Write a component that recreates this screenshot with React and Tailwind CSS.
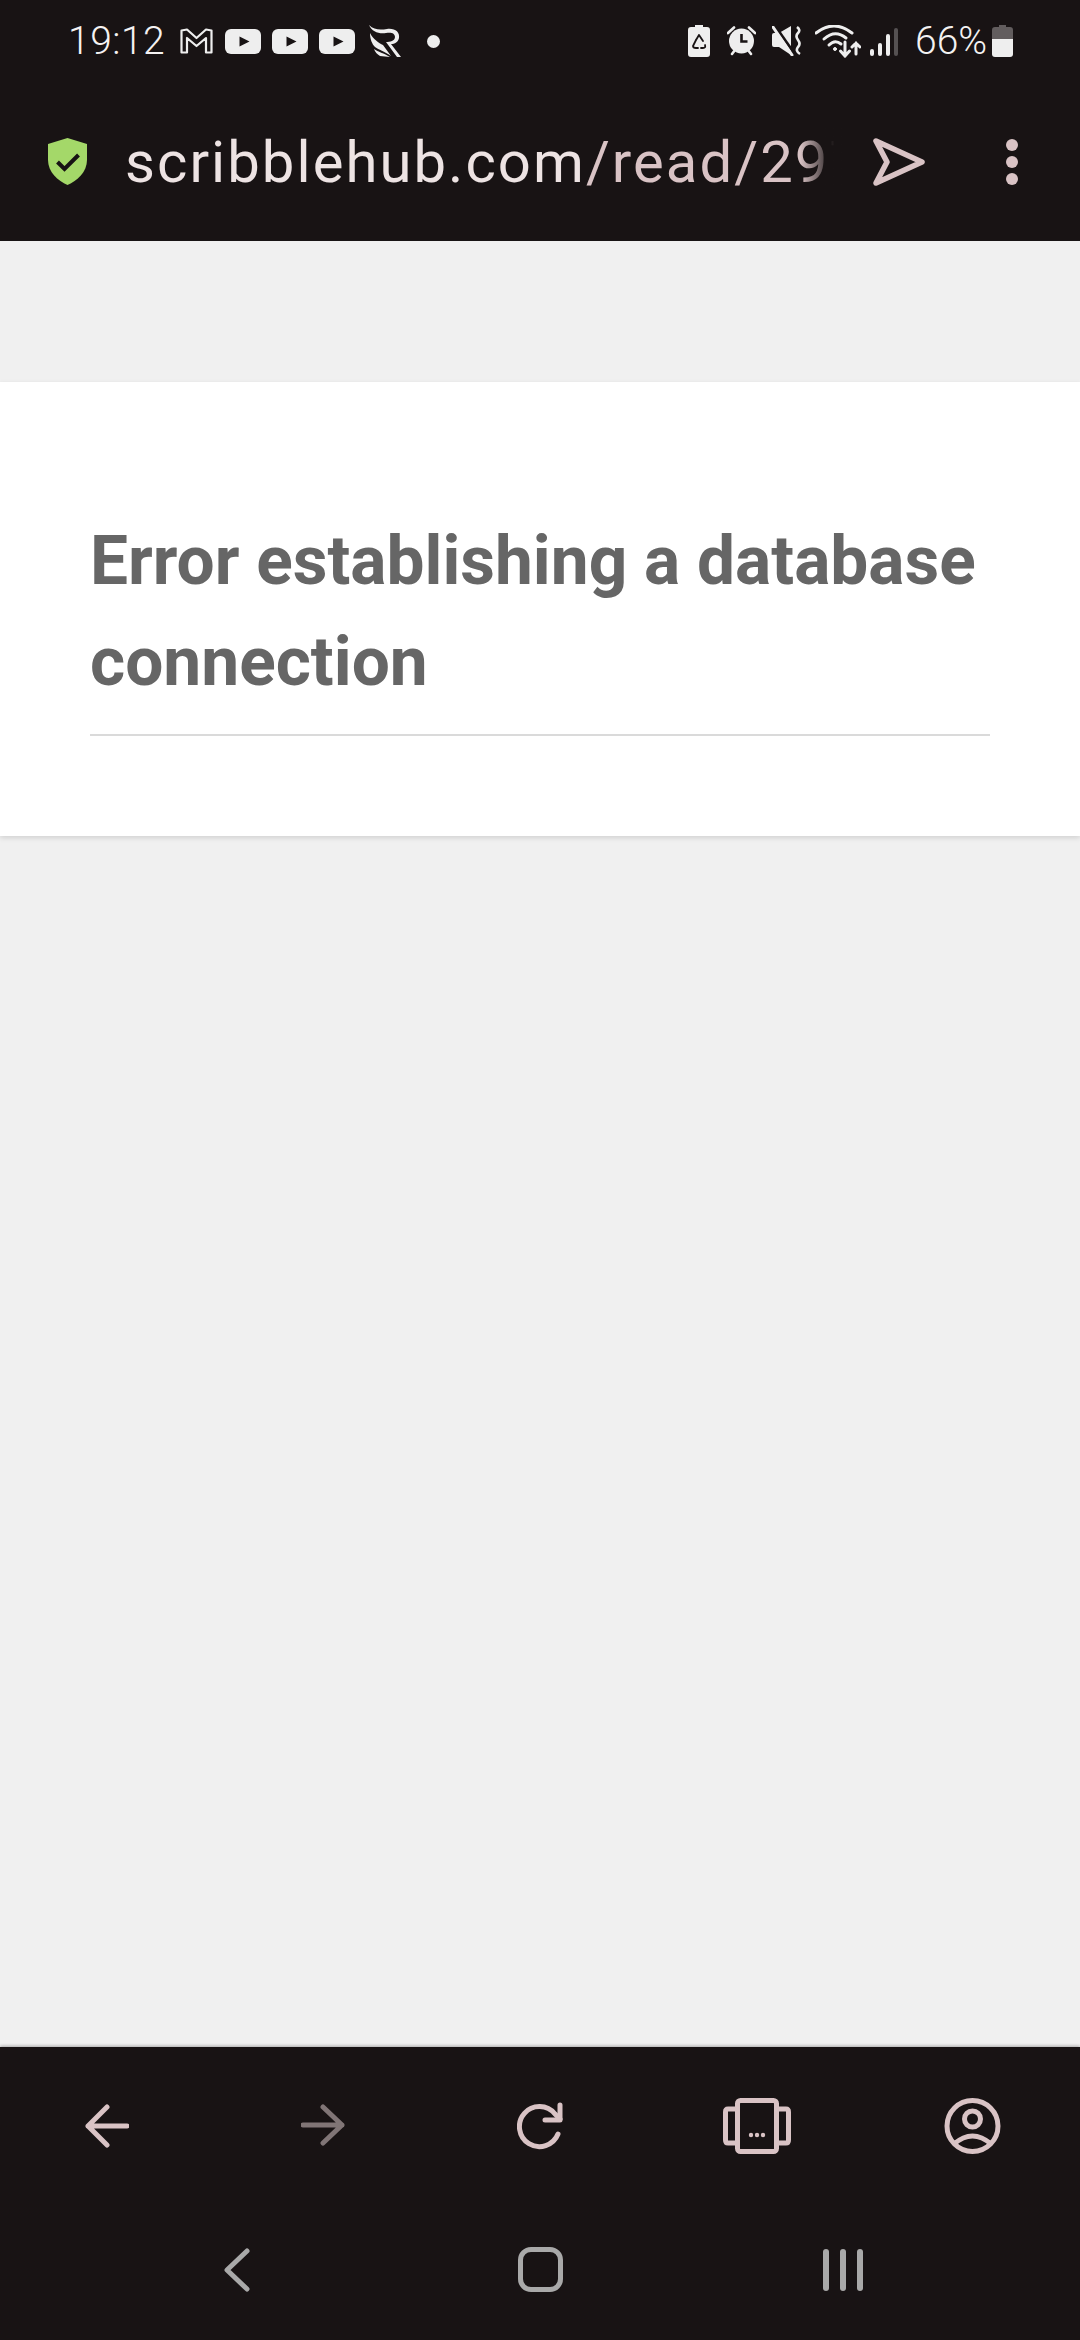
import React from 'react';

const Youtube = () => (
    <svg width="36" height="25" viewBox="0 0 36 25" className="shrink-0">
        <rect width="36" height="25" rx="6" fill="#eeeeee" />
        <path d="M14.5 7.5 L24.5 12.5 L14.5 17.5 Z" fill="#181314" />
    </svg>
);

const StatusLeft = () => (
    <div className="flex items-center">
        <span className="text-[39px] font-light text-[#f4f2f2] leading-none tracking-[0.5px] w-[112px]">19:12</span>
        <svg width="33" height="26" viewBox="0 0 33 26" className="shrink-0" fill="none" stroke="#eeeeee" strokeWidth="2.2" strokeLinejoin="round">
            <path d="M1.5 2.5 L7 1.5 L16.5 10 L26 1.5 L31.5 2.5 L31.5 24.5 L26 24.5 L26 10 L16.5 18 L7 10 L7 24.5 L1.5 24.5 Z" />
        </svg>
        <div className="flex items-center gap-[11px] ml-[12px]">
            <Youtube />
            <Youtube />
            <Youtube />
        </div>
        {/* feather logo */}
        <svg width="32" height="33" viewBox="0 0 32 33" className="ml-[14px] shrink-0" fill="#eeeeee">
            <path d="M0 0 C5 5 11 5 18 4 C26 3 31 7 30 13 C29 17 26 19 22 19 L32 32 L28 32 L17 17 C21 17 26 16 26 12 C26 8 22 7 17 8 C10 9 3 7 0 0 Z" />
            <path d="M1 8 C4 14 10 18 14 20 L22 31 C15 26 10 25 6 22 C3 19 1 14 1 8 Z" />
            <path d="M5 24 C9 27 15 28 21 32 L11 31 C8 29 6 27 5 24 Z" />
        </svg>
        <span className="w-[13px] h-[13px] rounded-full bg-[#eeeeee] ml-[26px]"></span>
    </div>
);

const StatusRight = () => (
    <div className="flex items-center">
        {/* battery saver */}
        <svg width="22" height="32" viewBox="0 0 22 32" className="shrink-0">
            <path d="M7 0 H15 V2 H19 Q22 2 22 5 V29 Q22 32 19 32 H3 Q0 32 0 29 V5 Q0 2 3 2 H7 Z" fill="#eeeeee" />
            <path d="M11 10 L15 16 M8 15 L5 21 Q5 23 8 23 H10 M13 23 H15 Q18 23 17 20" stroke="#181314" strokeWidth="1.8" fill="none" strokeLinecap="round" />
            <path d="M11 10 L8 15" stroke="#181314" strokeWidth="1.8" />
        </svg>
        {/* alarm */}
        <svg width="29" height="30" viewBox="0 0 29 30" className="ml-[17px] shrink-0">
            <circle cx="14.5" cy="15" r="12.5" fill="#eeeeee" />
            <path d="M14.5 8 V15.5 H20.5" stroke="#181314" strokeWidth="2.6" fill="none" />
            <path d="M1 7 L7 1.5 M28 7 L22 1.5 M5 28 L8 24 M24 28 L21 24" stroke="#eeeeee" strokeWidth="2.6" strokeLinecap="round" />
        </svg>
        {/* mute + vibrate */}
        <svg width="29" height="30" viewBox="0 0 29 30" className="ml-[16px] shrink-0">
            <path d="M0 9 Q0 7 2 7 H7 L19 0 V29 L7 21 H2 Q0 21 0 19 Z" fill="#eeeeee" />
            <path d="M3 0 L22 27" stroke="#181314" strokeWidth="3" />
            <path d="M1 1 L20 29" stroke="#eeeeee" strokeWidth="3" strokeLinecap="round" />
            <path d="M25 1 Q29 4 26 7 Q23 10 26 14 Q29 18 26 21 Q23 25 28 28" stroke="#eeeeee" strokeWidth="2.6" fill="none" />
        </svg>
        {/* wifi */}
        <svg width="46" height="33" viewBox="0 0 46 33" className="ml-[14px] shrink-0" fill="none" stroke="#eeeeee" strokeWidth="3" strokeLinecap="round">
            <path d="M1 8 Q19 -6 37 8" />
            <path d="M9 14 Q20 4 31 13" />
            <path d="M14 20 Q20 14 26 19" />
            <circle cx="20" cy="24" r="1.5" fill="#eeeeee" strokeWidth="1" />
            <path d="M30 17 V31 M25.5 26 L30 31 L34.5 26" />
            <path d="M41 29 V18 M37 22 L41 18 L45 22" />
        </svg>
        {/* signal */}
        <div className="flex items-end gap-[4px] h-[28px] ml-[9px] mt-[2px]">
            <span className="w-[4px] h-[7px] rounded-sm bg-[#eeeeee]"></span>
            <span className="w-[4px] h-[13px] rounded-sm bg-[#eeeeee]"></span>
            <span className="w-[4px] h-[22px] rounded-sm bg-[#eeeeee]"></span>
            <span className="w-[4px] h-[28px] rounded-sm bg-[#555152]"></span>
        </div>
        <span className="text-[39px] font-light text-[#f4f2f2] leading-none ml-[17px] w-[77px]">66%</span>
        <svg width="21" height="32" viewBox="0 0 21 32" className="shrink-0">
            <path d="M7 0 H14 V2 H18 Q21 2 21 5 V14 H0 V5 Q0 2 3 2 H7 Z" fill="#625d5e" />
            <path d="M0 14 H21 V29 Q21 32 18 32 H3 Q0 32 0 29 Z" fill="#eeeeee" />
        </svg>
    </div>
);

const App = () => {
    return (
        <div className="w-[1080px] h-[2340px] flex flex-col bg-[#f0f0f0] font-['Roboto',sans-serif] overflow-hidden">
            {/* Top chrome */}
            <div className="bg-[#181314] h-[241px] shrink-0">
                <div className="h-[82px] flex items-center justify-between pl-[68px] pr-[67px]">
                    <StatusLeft />
                    <StatusRight />
                </div>
                <div className="h-[159px] flex items-center pl-[48px]">
                    <svg width="39" height="47" viewBox="0 0 39 47" className="shrink-0">
                        <path d="M19.5 0 L39 6 V22 C39 34 29 43 19.5 47 C10 43 0 34 0 22 V6 Z" fill="#a4d869" />
                        <path d="M9.5 24 L16.5 31 L30.5 17" stroke="#181314" strokeWidth="4" fill="none" />
                    </svg>
                    <div className="relative ml-[38px] w-[721px] overflow-hidden">
                        <div className="text-[58px] leading-[70px] tracking-[2.05px] whitespace-nowrap text-[#d9c3c5]">
                            <span className="text-[#ede3e3]">scribblehub.com</span>/read/297
                        </div>
                        <div className="absolute right-0 top-0 h-full w-[46px] bg-gradient-to-r from-transparent to-[#181314] to-75%"></div>
                    </div>
                    <svg width="52" height="48" viewBox="0 0 52 48" className="ml-[27px] shrink-0" fill="none" stroke="#d9c3c5" strokeWidth="5.5" strokeLinejoin="round">
                        <path d="M3 3 L49 24 L3 45 L14 24 Z" />
                    </svg>
                    <div className="flex flex-col gap-[5px] ml-[81px]">
                        <span className="w-[12px] h-[12px] rounded-full bg-[#d9c3c5]"></span>
                        <span className="w-[12px] h-[12px] rounded-full bg-[#d9c3c5]"></span>
                        <span className="w-[12px] h-[12px] rounded-full bg-[#d9c3c5]"></span>
                    </div>
                </div>
            </div>

            {/* Error page */}
            <div className="flex-1">
                <div className="mt-[141px] h-[454px] bg-white px-[90px] pt-[129px] shadow-[0_2px_5px_rgba(0,0,0,0.13)]">
                    <h1 className="text-[67.6px] leading-[101px] font-bold text-[#666666] pb-[21px] border-b-2 border-[#dadada]">
                        Error establishing a database connection
                    </h1>
                </div>
            </div>

            {/* Bottom toolbar + nav */}
            <div className="bg-[#181314] h-[293px] shrink-0 shadow-[0_-1px_3px_rgba(0,0,0,0.3)]">
                <div className="h-[158px] flex items-center pl-[85px]">
                    <svg width="44" height="44" viewBox="0 0 44 44" className="shrink-0" fill="none" stroke="#d9c3c5" strokeWidth="5" strokeLinecap="round" strokeLinejoin="round">
                        <path d="M42 22 H3 M22 3 L3 22 L22 41" />
                    </svg>
                    <svg width="44" height="42" viewBox="0 0 44 42" className="ml-[172px] -mt-[3px] shrink-0" fill="none" stroke="#807576" strokeWidth="5" strokeLinecap="round" strokeLinejoin="round">
                        <path d="M2 21 H41 M22 3 L41 21 L22 39" />
                    </svg>
                    <svg width="46" height="48" viewBox="0 0 46 48" className="ml-[172px] shrink-0" fill="none" stroke="#d9c3c5" strokeWidth="5" strokeLinecap="round" strokeLinejoin="round">
                        <path d="M41 32 A20 20 0 1 1 38 12 L43 17" />
                        <path d="M43 3 V18 H28" />
                    </svg>
                    <svg width="68" height="56" viewBox="0 0 68 56" className="ml-[160px] shrink-0" fill="none" stroke="#d9c3c5" strokeWidth="5" strokeLinejoin="round">
                        <rect x="14.5" y="2.5" width="39" height="51" rx="3" />
                        <path d="M14 11 H5 Q2.5 11 2.5 14 V42 Q2.5 45 5 45 H14 M54 11 H63 Q65.5 11 65.5 14 V42 Q65.5 45 63 45 H54" />
                        <circle cx="28" cy="37" r="2.2" fill="#d9c3c5" stroke="none" />
                        <circle cx="34" cy="37" r="2.2" fill="#d9c3c5" stroke="none" />
                        <circle cx="40" cy="37" r="2.2" fill="#d9c3c5" stroke="none" />
                    </svg>
                    <svg width="57" height="56" viewBox="0 0 57 56" className="ml-[153px] shrink-0" fill="none" stroke="#d9c3c5" strokeWidth="5">
                        <circle cx="28.5" cy="28" r="25.5" />
                        <circle cx="28.5" cy="21" r="8" />
                        <path d="M10 46 Q28.5 30 47 46" />
                    </svg>
                </div>
                <div className="h-[135px] flex items-start pl-[224px] pt-[43px]">
                    <svg width="26" height="44" viewBox="0 0 26 44" className="shrink-0" fill="none" stroke="#a9a9a9" strokeWidth="5" strokeLinecap="round" strokeLinejoin="round">
                        <path d="M23 3 L3 22 L23 41" />
                    </svg>
                    <div className="ml-[268px] -mt-[1px] w-[45px] h-[45px] rounded-[13px] border-[5px] border-[#a9a9a9]"></div>
                    <div className="ml-[260px] mt-[1px] flex gap-[11px]">
                        <span className="w-[6px] h-[42px] rounded-full bg-[#a9a9a9]"></span>
                        <span className="w-[6px] h-[42px] rounded-full bg-[#a9a9a9]"></span>
                        <span className="w-[6px] h-[42px] rounded-full bg-[#a9a9a9]"></span>
                    </div>
                </div>
            </div>
        </div>
    );
};

export default App;
